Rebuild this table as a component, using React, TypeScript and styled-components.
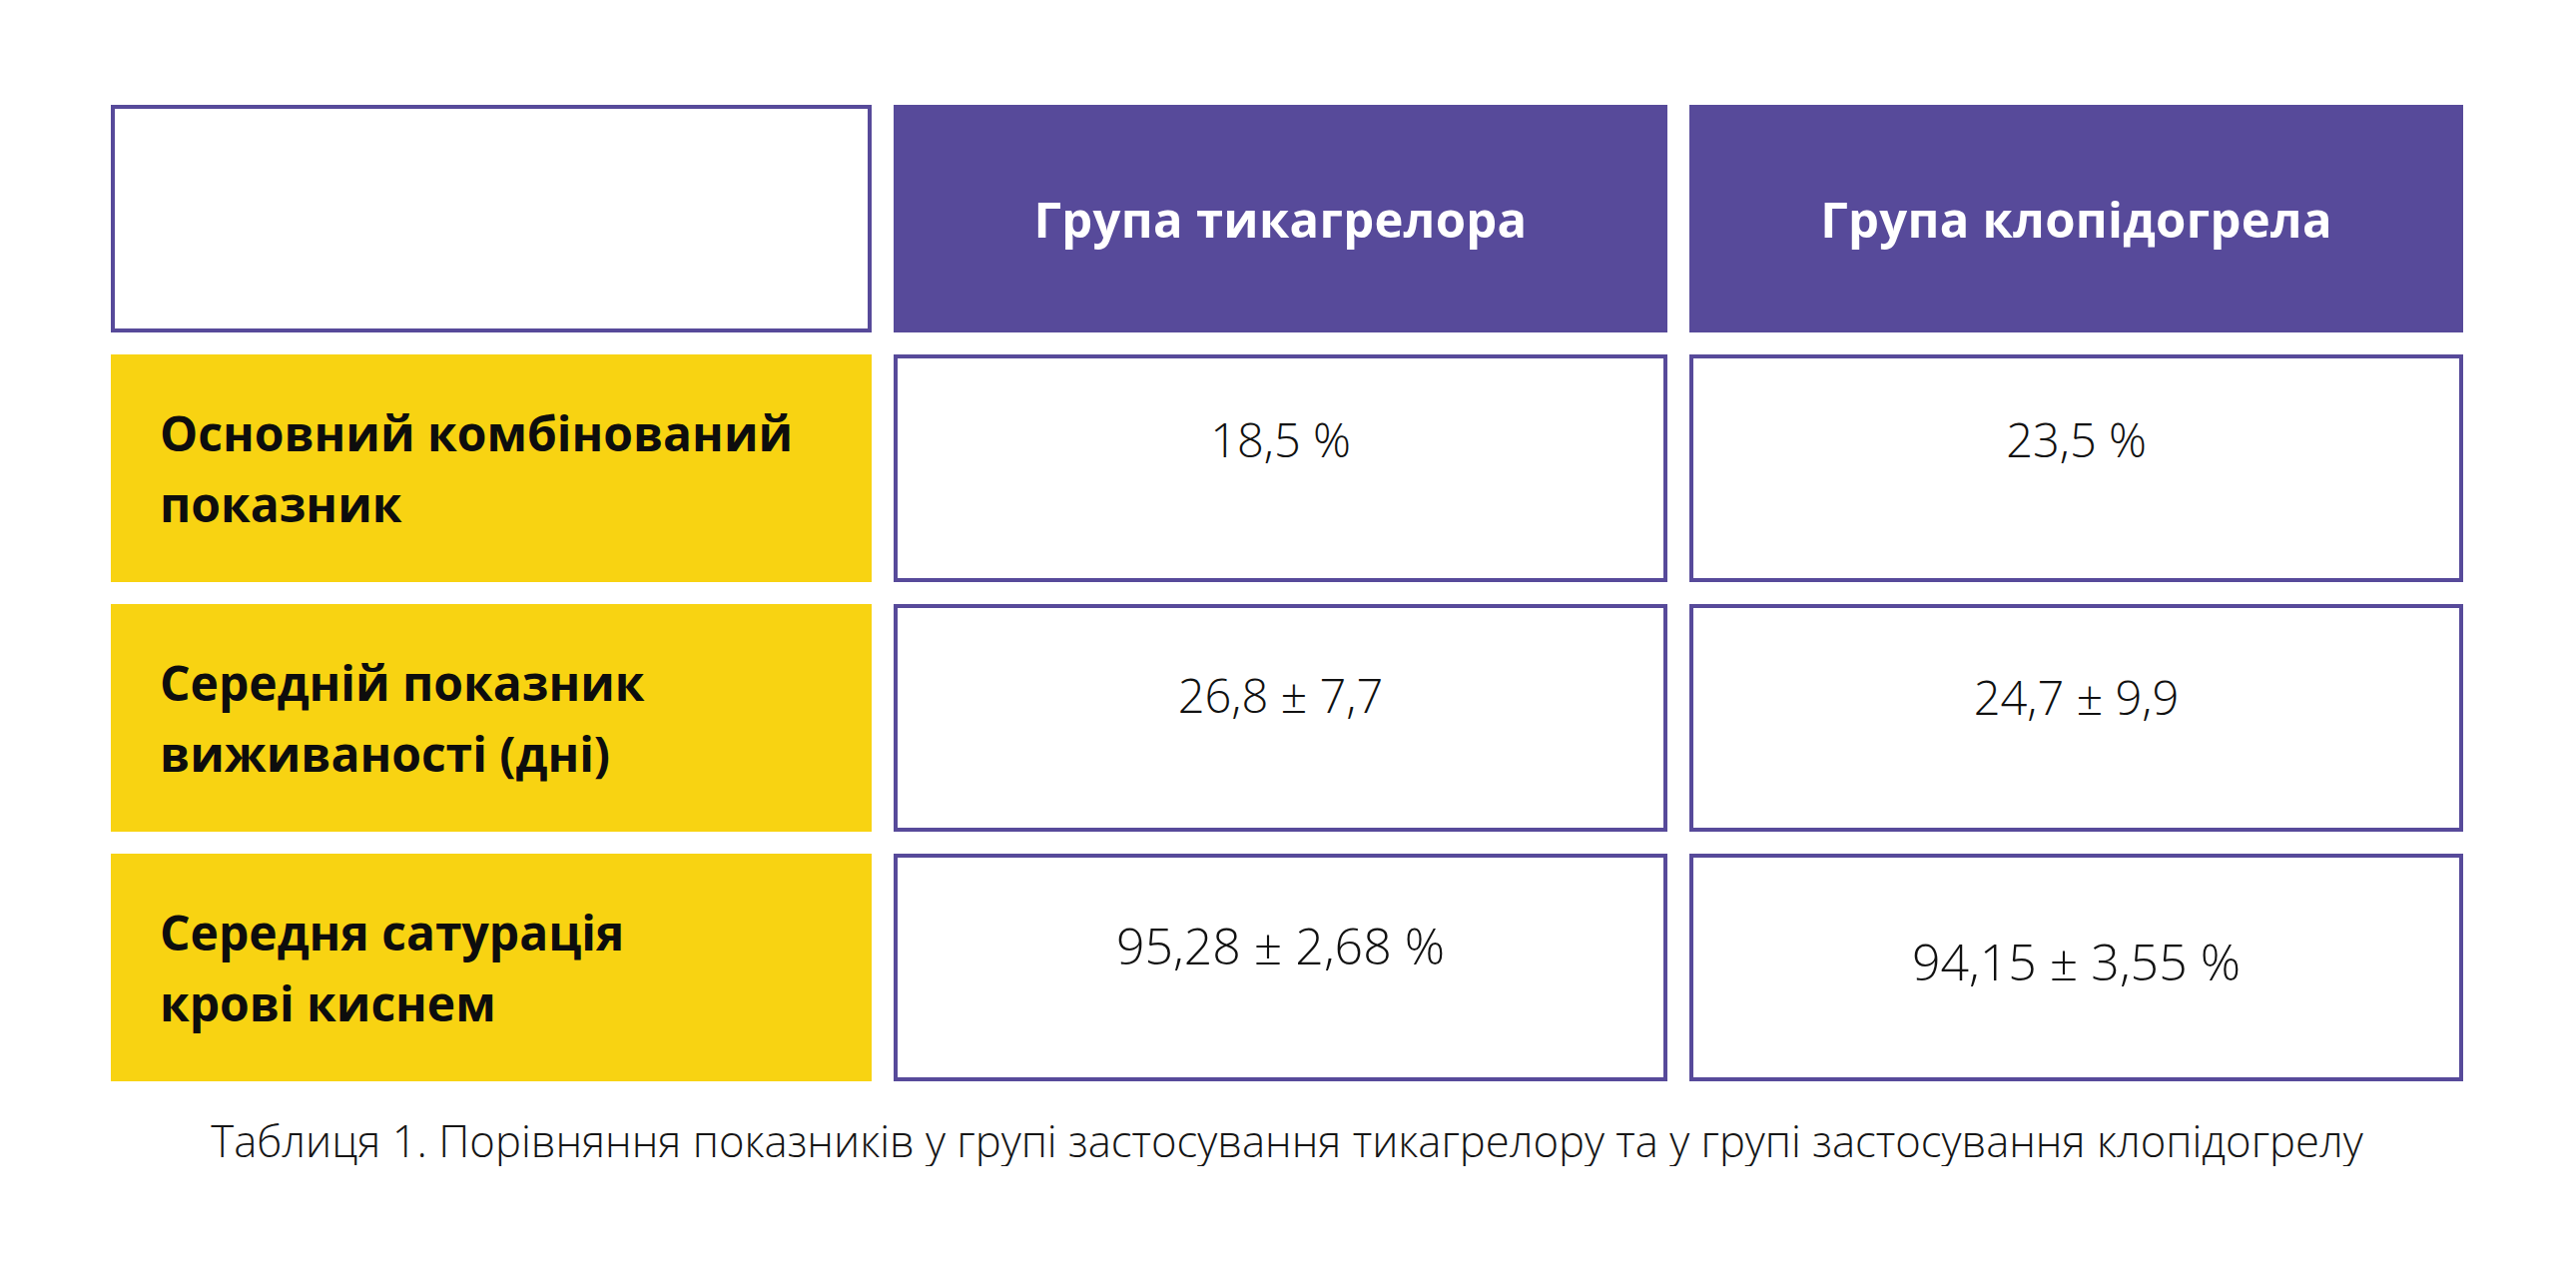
import { Fragment } from "react";
import styled, { createGlobalStyle } from "styled-components";

const GlobalStyle = createGlobalStyle`
  body {
    margin: 0;
    background: #ffffff;
    font-family: "Open Sans", "Noto Sans", sans-serif;
    color: #111111;
  }
`;

const PURPLE = "#574a9a";
const YELLOW = "#f8d312";

const Page = styled.div`
  padding: 105px 0 0 111px;
  width: 2356px;
`;

const Table = styled.div`
  display: grid;
  grid-template-columns: 762px 775px 775px;
  grid-auto-rows: 228px;
  gap: 22px;
`;

const EmptyCell = styled.div`
  box-sizing: border-box;
  border: 4px solid ${PURPLE};
  background: #ffffff;
`;

const HeaderCell = styled.div`
  display: flex;
  align-items: center;
  justify-content: center;
  background: ${PURPLE};
  color: #ffffff;
  font-weight: 700;
  font-size: 49px;
  letter-spacing: 0.3px;
`;

const LabelCell = styled.div`
  display: flex;
  align-items: center;
  padding: 0 40px 0 49px;
  background: ${YELLOW};
  color: #0d0d0d;
  font-weight: 700;
  font-size: 48px;
  line-height: 71px;
`;

const ValueCell = styled.div<{ $top: number; $size: number }>`
  box-sizing: border-box;
  display: flex;
  justify-content: center;
  align-items: flex-start;
  padding-top: ${(p) => p.$top}px;
  border: 4px solid ${PURPLE};
  background: #ffffff;
  color: #111111;
  font-weight: 300;
  font-size: ${(p) => p.$size}px;
  line-height: 1;
`;

const Caption = styled.p`
  margin: 33px 0 0;
  text-align: center;
  font-weight: 300;
  font-size: 43.6px;
  line-height: 1.2;
  color: #161616;
`;

type Row = {
  label: string[];
  values: { text: string; top: number; size: number }[];
};

const rows: Row[] = [
  {
    label: ["Основний комбінований", "показник"],
    values: [
      { text: "18,5 %", top: 58, size: 47 },
      { text: "23,5 %", top: 58, size: 47 },
    ],
  },
  {
    label: ["Середній показник", "виживаності (дні)"],
    values: [
      { text: "26,8 ± 7,7", top: 64, size: 47 },
      { text: "24,7 ± 9,9", top: 66, size: 47 },
    ],
  },
  {
    label: ["Середня сатурація", "крові киснем"],
    values: [
      { text: "95,28 ± 2,68 %", top: 63, size: 50 },
      { text: "94,15 ± 3,55 %", top: 79, size: 50 },
    ],
  },
];

export default function App() {
  return (
    <>
      <GlobalStyle />
      <Page>
        <Table>
          <EmptyCell />
          <HeaderCell>Група тикагрелора</HeaderCell>
          <HeaderCell>Група клопідогрела</HeaderCell>
          {rows.map((row) => (
            <Fragment key={row.label[0]}>
              <LabelCell>
                <span>
                  {row.label[0]}
                  <br />
                  {row.label[1]}
                </span>
              </LabelCell>
              {row.values.map((v) => (
                <ValueCell key={v.text} $top={v.top} $size={v.size}>
                  {v.text}
                </ValueCell>
              ))}
            </Fragment>
          ))}
        </Table>
        <Caption>
          Таблиця 1. Порівняння показників у групі застосування тикагрелору та
          у групі застосування клопідогрелу
        </Caption>
      </Page>
    </>
  );
}
